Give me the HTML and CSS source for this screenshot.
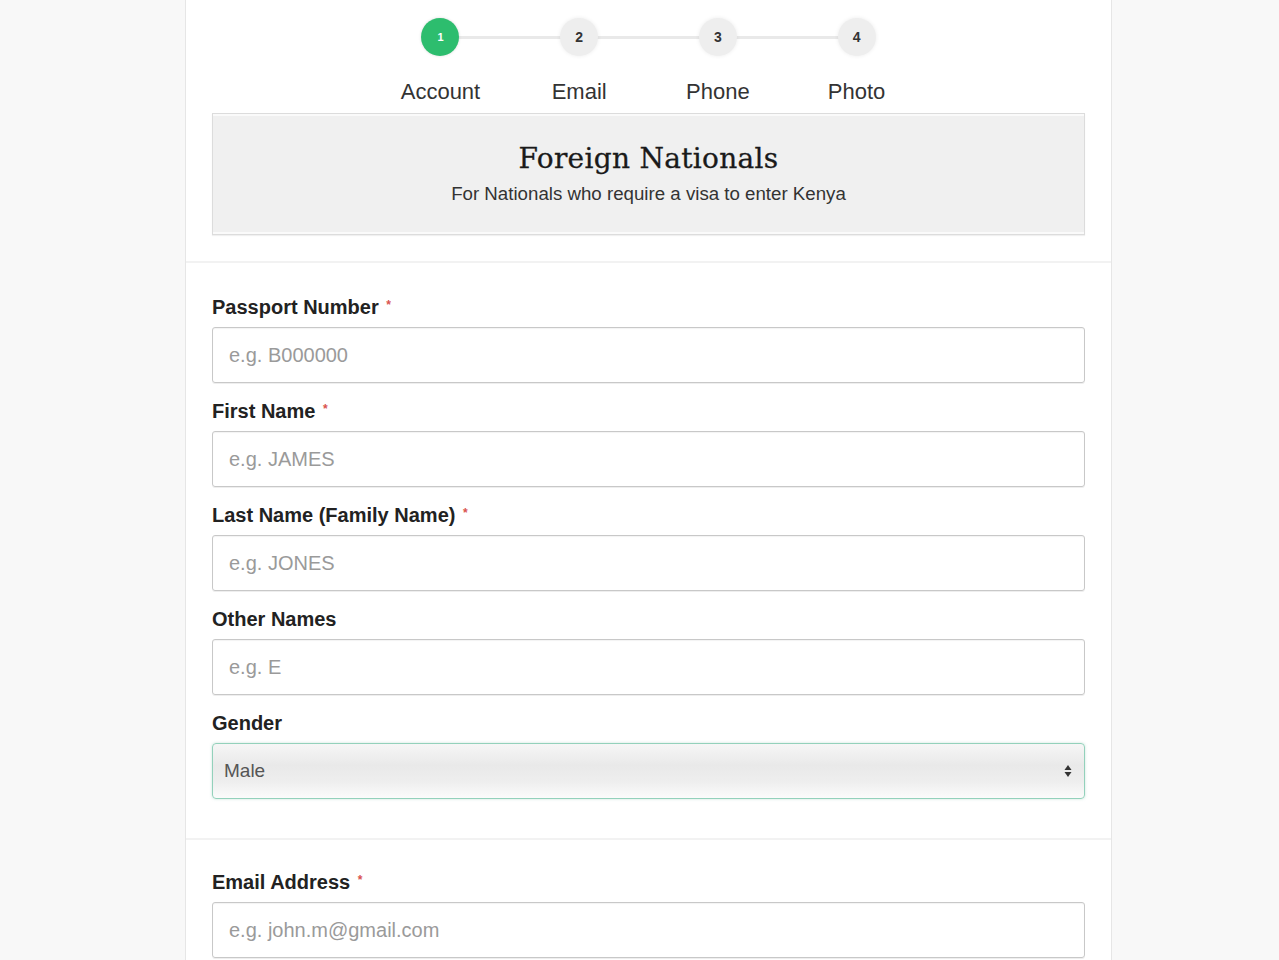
FILE: index.html
```html
<!DOCTYPE html>
<html>
<head>
<meta charset="utf-8">
<link rel="stylesheet" href="styles.css">
</head>
<body>
<div class="page">
  <div class="card">
    <section class="top">
      <div class="stepper">
        <div class="step active"><span class="dot">1</span><span class="label">Account</span></div>
        <div class="step"><span class="dot">2</span><span class="label">Email</span></div>
        <div class="step"><span class="dot">3</span><span class="label">Phone</span></div>
        <div class="step"><span class="dot">4</span><span class="label">Photo</span></div>
      </div>
      <div class="banner">
        <h1>Foreign Nationals</h1>
        <p>For Nationals who require a visa to enter Kenya</p>
      </div>
    </section>
    <section class="form">
      <div class="group">
        <label>Passport Number <span class="req">*</span></label>
        <div class="input">e.g. B000000</div>
      </div>
      <div class="group">
        <label>First Name <span class="req">*</span></label>
        <div class="input">e.g. JAMES</div>
      </div>
      <div class="group">
        <label>Last Name (Family Name) <span class="req">*</span></label>
        <div class="input">e.g. JONES</div>
      </div>
      <div class="group">
        <label>Other Names</label>
        <div class="input">e.g. E</div>
      </div>
      <div class="group">
        <label>Gender</label>
        <div class="select"><span>Male</span>
          <svg class="arrows" width="8" height="16" viewBox="0 0 8 16"><path d="M4 2 L7.5 7 L0.5 7 Z" fill="#333"/><path d="M4 14 L7.5 9 L0.5 9 Z" fill="#333"/></svg>
        </div>
      </div>
    </section>
    <section class="form email">
      <div class="group">
        <label>Email Address <span class="req">*</span></label>
        <div class="input">e.g. john.m@gmail.com</div>
      </div>
    </section>
  </div>
</div>
</body>
</html>
```
FILE: styles.css
```css
* { box-sizing: border-box; }
html, body { margin: 0; padding: 0; }
body {
  background: #f8f8f8;
  font-family: "Liberation Sans", Arial, sans-serif;
  color: #222;
  height: 960px;
  overflow: hidden;
}
.page { padding-left: 185px; }
.card {
  width: 927px;
  background: #fff;
  border-left: 1px solid #e6e6e6;
  border-right: 1px solid #e6e6e6;
  min-height: 960px;
}
.top { padding: 18px 26px 26px; }
.stepper {
  display: flex;
  justify-content: center;
}
.step {
  width: 138.7px;
  display: flex;
  flex-direction: column;
  align-items: center;
  position: relative;
}
.step + .step::before {
  content: "";
  position: absolute;
  top: 18px;
  left: -50%;
  width: 100%;
  height: 3px;
  background: #e9e9e9;
  z-index: 0;
}
.dot {
  position: relative;
  z-index: 1;
  width: 38px;
  height: 38px;
  border-radius: 50%;
  background: #eeeeee;
  box-shadow: 0 0 4px rgba(0,0,0,0.08);
  display: flex;
  align-items: center;
  justify-content: center;
  font-size: 14px;
  font-weight: bold;
  color: #333;
}
.step.active .dot {
  background: #2dbd6e;
  color: #fff;
  box-shadow: 0 0 3px rgba(0,0,0,0.15);
  font-size: 11px;
}
.label {
  margin-top: 24px;
  font-size: 22px;
  line-height: 24px;
  color: #333;
}
.banner {
  margin-top: 9px;
  height: 122px;
  background: #f0f0f0;
  border: 1px solid #dcdcdc;
  box-shadow: inset 0 2px 0 #fafafa, inset 0 -2px 0 #fafafa, 0 1px 1px rgba(0,0,0,0.06);
  text-align: center;
  padding-top: 28px;
}
.banner h1 {
  margin: 0;
  font-family: "DejaVu Serif", "Liberation Serif", serif;
  font-weight: normal;
  font-size: 28px;
  line-height: 34px;
  color: #1a1a1a;
  letter-spacing: 0.3px;
  -webkit-text-stroke: 0.3px #1a1a1a;
}
.banner p {
  margin: 7px 0 0;
  font-size: 18.7px;
  line-height: 22px;
  color: #333;
}
.form {
  border-top: 2px solid #f2f2f2;
  padding: 32px 26px 23px;
}
.form.email { padding-top: 30px; }
.group { margin-bottom: 16px; }
.group label {
  display: block;
  font-weight: bold;
  font-size: 20px;
  line-height: 24px;
  height: 24px;
  color: #222;
  margin-bottom: 8px;
}
.req {
  color: #d9534f;
  font-size: 12px;
  line-height: 0;
  vertical-align: 5px;
  margin-left: 2px;
}
.input {
  height: 56px;
  border: 1px solid #c8c8c8;
  border-radius: 3px;
  box-shadow: inset 0 1px 1px rgba(0,0,0,0.05), 0 1px 0 #eee;
  padding: 0 16px;
  display: flex;
  align-items: center;
  font-size: 20px;
  color: #9a9a9a;
}
.select {
  height: 56px;
  border: 1px solid #93d1bb;
  border-radius: 4px;
  background: linear-gradient(#f6f6f6 0%, #e9e9e9 40%, #eeeeee 70%, #fbfbfb 100%);
  box-shadow: 0 0 3px rgba(102,175,150,0.35);
  padding: 0 12px 0 11px;
  display: flex;
  align-items: center;
  justify-content: space-between;
  font-size: 19px;
  color: #555;
}
```
